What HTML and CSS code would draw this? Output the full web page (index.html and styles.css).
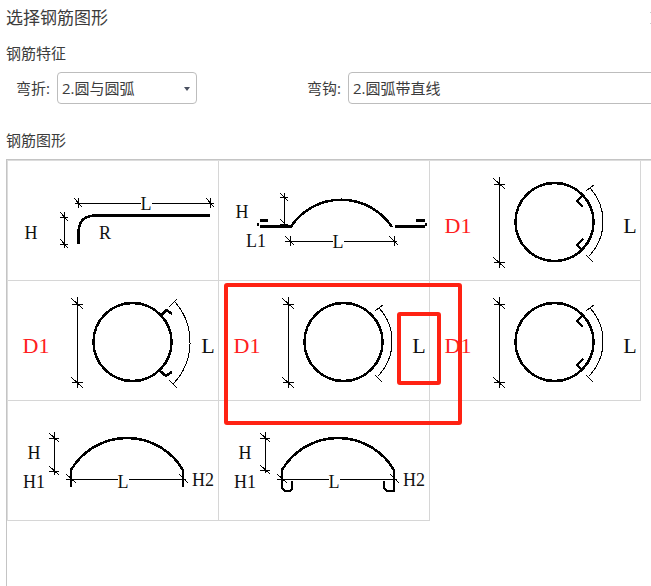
FILE: index.html
```
<!DOCTYPE html>
<html lang="zh-Hans">
<head>
  <meta charset="UTF-8" />
  <meta name="viewport" content="width=device-width, initial-scale=1.0"/>
  <title>选择钢筋图形</title>
  <link rel="stylesheet" href="styles.css">
</head>
<body>
  <!-- 公用图元 -->
  <svg class="defs" width="0" height="0" aria-hidden="true">
    <defs>
      <g id="dim-d">
        <path class="thin" d="M69 16V107M64 23H75M64 101H75M63 17L75 28M63 96L75 107"/>
      </g>
      <circle id="ring" class="bar" cx="124.5" cy="61" r="39"/>
      <path id="dim-arc" class="thin" d="M160 27A49.6 49.6 0 0 1 159 95M156 30L164 24M156 94L163 101"/>
      <path id="hooks-in" class="bar" d="M152 35L147 40L153 46M153 78L147 84L152 89"/>
    </defs>
  </svg>

  <div class="header">
    <h1>选择钢筋图形</h1>
    <button class="close" aria-label="关闭">
      <svg width="12" height="12" viewBox="0 0 12 12"><path d="M0 0L12 12M12 0L0 12"/></svg>
    </button>
  </div>

  <h2>钢筋特征</h2>
  <div class="filters">
    <div class="field">
      <label for="bend">弯折:</label>
      <div class="select-box">
        <select id="bend"><option>2.圆与圆弧</option></select>
      </div>
    </div>
    <div class="field wide">
      <label for="hook">弯钩:</label>
      <div class="select-box">
        <select id="hook"><option>2.圆弧带直线</option></select>
      </div>
    </div>
  </div>

  <h2 class="shapes-title">钢筋图形</h2>
  <div class="panel">
    <div class="shapes">
      <button class="shape">
        <svg viewBox="0 0 210 119">
          <path class="thin" d="M67 42H133M144 42H206M70 37V47M202 37V47M66 37L74 46M198 37L206 46"/>
          <path class="thin" d="M56 51V87M52 56H60M52 83H60M52 51L60 60M52 78L60 87"/>
          <path class="bar" d="M70.5 83V71Q71 55 87 54.5H202"/>
          <text x="138" y="49">L</text>
          <text x="23" y="78">H</text>
          <text x="97" y="78">R</text>
        </svg>
      </button>

      <button class="shape">
        <svg viewBox="0 0 210 119">
          <path class="thin" d="M65 32V65M61 36H69M61 63H69M61 32L69 40M61 58L69 66"/>
          <path class="thin" d="M66 80H114M125 80H178M71 75V85M175 75V85M66 75L75 84M170 75L179 84"/>
          <path class="bar" d="M41 65.5H72A60.7 60.7 0 0 1 173 66M176 65.5H206M41 59.5H49M197 59.5H206M38 63.5H40M206 63.5H208"/>
          <text x="23" y="57">H</text>
          <text x="37" y="86">L1</text>
          <text x="119" y="87">L</text>
        </svg>
      </button>

      <button class="shape">
        <svg viewBox="0 0 210 119">
          <use href="#dim-d"/><use href="#ring"/><use href="#hooks-in"/><use href="#dim-arc"/>
          <text class="big red" x="28" y="72">D1</text>
          <text class="big" x="200" y="72">L</text>
        </svg>
      </button>

      <button class="shape">
        <svg viewBox="0 0 210 119">
          <use href="#dim-d"/><use href="#ring"/>
          <path class="bar" d="M153 35L158 29L164 33M151 89L158 95L164 91"/>
          <path class="thin" d="M167 21A60.5 60.5 0 0 1 165 103M161 26L169 18M161 99L169 107"/>
          <text class="big red" x="28" y="72">D1</text>
          <text class="big" x="200" y="72">L</text>
        </svg>
      </button>

      <button class="shape">
        <svg viewBox="0 0 210 119">
          <use href="#dim-d"/><use href="#ring"/><use href="#dim-arc"/>
          <text class="big red" x="28" y="72">D1</text>
          <text class="big" x="200" y="72">L</text>
        </svg>
      </button>

      <button class="shape">
        <svg viewBox="0 0 210 119">
          <use href="#dim-d"/><use href="#ring"/><use href="#hooks-in"/><use href="#dim-arc"/>
          <text class="big red" x="28" y="72">D1</text>
          <text class="big" x="200" y="72">L</text>
        </svg>
      </button>

      <button class="shape">
        <svg viewBox="0 0 210 119">
          <path class="thin" d="M46 31V74M41 37H51M41 70H51M41 32L51 41M41 65L51 74"/>
          <path class="thin" d="M58 78H110M121 78H178M58 73L68 82M171 73L180 82"/>
          <path class="bar" d="M63 86V69A65 65 0 0 1 175 69V86"/>
          <text x="26" y="58">H</text>
          <text x="26" y="87">H1</text>
          <text x="115" y="87">L</text>
          <text x="195" y="85">H2</text>
        </svg>
      </button>

      <button class="shape">
        <svg viewBox="0 0 210 119">
          <path class="thin" d="M46 31V72M41 37H51M41 69H51M41 32L51 41M41 64L51 73"/>
          <path class="thin" d="M58 78H110M121 78H178M58 73L68 82M171 73L180 82"/>
          <path class="bar" d="M73 80V88L71 90H66L63 87V69A65 65 0 0 1 175 69V90H168L165 87V80"/>
          <text x="26" y="58">H</text>
          <text x="26" y="87">H1</text>
          <text x="115" y="87">L</text>
          <text x="195" y="85">H2</text>
        </svg>
      </button>
    </div>

    <!-- 红框标注 -->
    <div class="mark mark-shape"></div>
    <div class="mark mark-length"></div>
  </div>
</body>
</html>
```

FILE: styles.css
```
* {
  box-sizing: border-box;
}
body {
  margin: 0;
  padding-left: 6px;
  min-height: 100vh;
  display: flex;
  flex-direction: column;
  overflow: hidden;
  font-family: "Open Sans", "Noto Sans CJK SC", sans-serif;
  font-size: 15px;
  line-height: 20px;
  background-color: #fff;
  color: #3c3c3c;
}
.defs {
  position: absolute;
}
.header {
  display: flex;
  justify-content: space-between;
  align-items: center;
  height: 36px;
}
h1,
h2 {
  margin: 0;
  font-weight: normal;
}
h1 {
  font-size: 17px;
  line-height: 36px;
}
h2 {
  margin-top: 7px;
  font-size: 15px;
  line-height: 20px;
}
.close {
  flex: none;
  margin-right: -11px;
  padding: 0;
  border: none;
  background: none;
}
.close svg {
  display: block;
  fill: none;
  stroke: #ccc;
}
.filters {
  display: grid;
  grid-template-columns: 291px 1fr;
  margin-top: 9px;
  padding-left: 10px;
}
.field {
  display: flex;
  align-items: center;
}
.field label {
  width: 41px;
}
.select-box {
  position: relative;
  width: 140px;
}
.select-box::after {
  content: "";
  position: absolute;
  right: 7px;
  top: 15px;
  border: 3px solid transparent;
  border-top: 4px solid #4a5060;
  border-bottom: none;
}
.select-box select {
  display: block;
  width: 100%;
  height: 32px;
  padding: 0 4px;
  appearance: none;
  border: 1px solid #bdbdbd;
  border-radius: 4px;
  background-color: #fff;
  color: #3c3c3c;
  font: inherit;
}
/* 右侧下拉框延伸到窗口外 */
.field.wide {
  margin-right: -20px;
}
.field.wide .select-box {
  flex: 1;
}
.shapes-title {
  margin-top: 26px;
}
.panel {
  position: relative;
  flex: 1;
  margin-top: 9px;
  border-top: 1px solid #c4c4c4;
  border-left: 1px solid #c4c4c4;
}
.shapes {
  display: grid;
  grid-template-columns: repeat(auto-fill, 211px);
  grid-auto-rows: 120px;
  border-top: 1px solid #dcdcdc;
  border-left: 1px solid #dcdcdc;
}
.shape {
  padding: 0;
  border: none;
  border-right: 1px solid #d6d6d6;
  border-bottom: 1px solid #d6d6d6;
  background: none;
}
.shape svg {
  display: block;
  width: 100%;
  height: 100%;
}
.thin,
.bar {
  fill: none;
  stroke: #000;
  stroke-width: 1;
  shape-rendering: crispEdges;
}
.bar {
  stroke-width: 2.5;
}
.shape text {
  font-family: "Liberation Serif", serif;
  font-size: 18px;
  text-anchor: middle;
  fill: #111;
}
.shape text.big {
  font-size: 22px;
}
.shape text.red {
  fill: #ff2020;
}
.mark {
  position: absolute;
  border: 4px solid #ff2213;
  border-radius: 3px;
  pointer-events: none;
}
.mark-shape {
  left: 217px;
  top: 123px;
  width: 238px;
  height: 142px;
}
.mark-length {
  left: 390px;
  top: 152px;
  width: 44px;
  height: 73px;
}
```
